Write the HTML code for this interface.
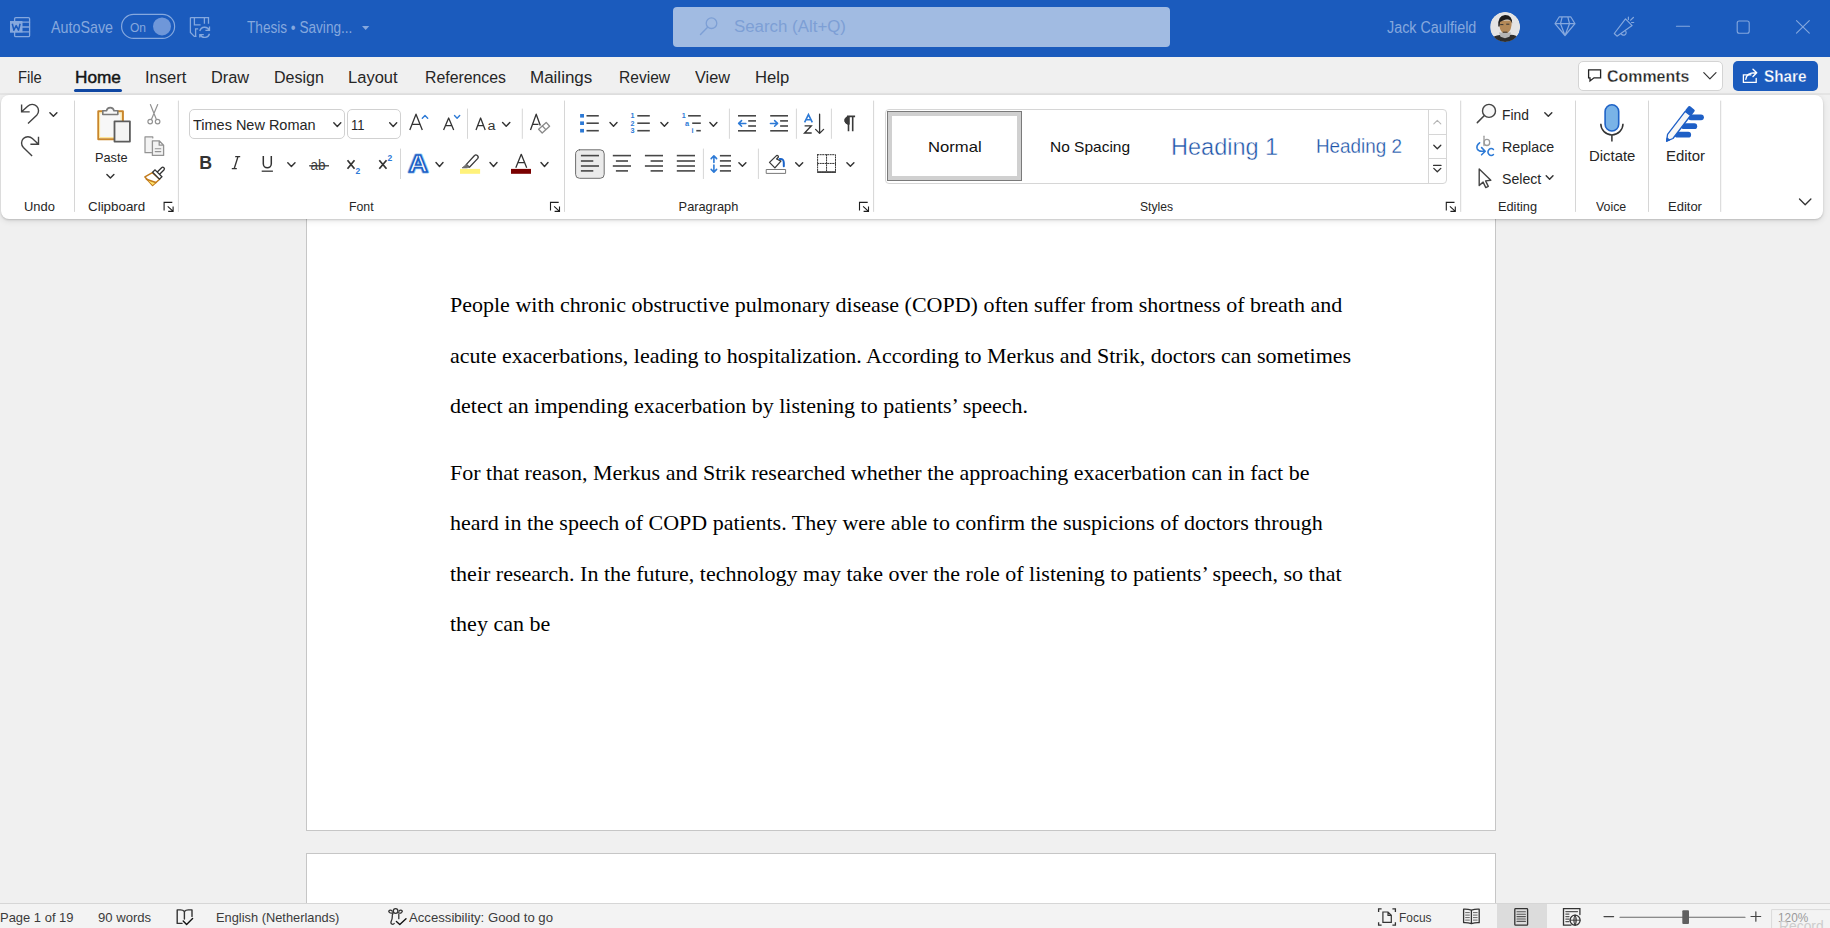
<!DOCTYPE html><html><head><meta charset="utf-8"><style>
html,body{margin:0;padding:0;width:1830px;height:928px;overflow:hidden;background:#f0f0f0;font-family:"Liberation Sans",sans-serif}
.t{position:absolute;white-space:pre;transform-origin:0 0}
svg{position:absolute;left:0;top:0}
</style></head><body>
<div style="position:absolute;left:0px;top:0px;width:1830px;height:57px;background:#1b5bbd"></div>
<div style="position:absolute;left:673px;top:7px;width:497px;height:40px;background:#a1bbe2;border-radius:4px"></div>
<div style="position:absolute;left:0px;top:57px;width:1830px;height:38px;background:#f0f0f0"></div>
<div style="position:absolute;left:0px;top:219px;width:1830px;height:684px;background:#f0f0f0"></div>
<div style="position:absolute;left:306px;top:150px;width:1190px;height:681px;background:#fff;border:1px solid #c6c6c6;box-sizing:border-box"></div>
<div style="position:absolute;left:306px;top:853px;width:1190px;height:60px;background:#fff;border:1px solid #c6c6c6;box-sizing:border-box"></div>
<div style="position:absolute;left:0px;top:93px;width:1830px;height:2px;background:#e4e4e4"></div>
<div style="position:absolute;left:1px;top:95px;width:1822px;height:124px;background:#fff;border-radius:8px;box-shadow:0 1px 2px rgba(0,0,0,0.16),0 2px 6px rgba(0,0,0,0.10)"></div>
<div style="position:absolute;left:0px;top:903px;width:1830px;height:25px;background:#f3f3f3;border-top:1px solid #d6d6d6;box-sizing:border-box"></div>
<div class="t" style="left:50.50px;top:12px;font-size:16.2px;line-height:30px;color:#85a8de;font-family:'Liberation Sans', sans-serif;transform:scaleX(0.8832);">AutoSave</div>
<div class="t" style="left:129.60px;top:13px;font-size:13px;line-height:30px;color:#85a8de;font-family:'Liberation Sans', sans-serif;transform:scaleX(0.9249);">On</div>
<div class="t" style="left:246.50px;top:13px;font-size:16px;line-height:30px;color:#85a8de;font-family:'Liberation Sans', sans-serif;transform:scaleX(0.8507);">Thesis • Saving...</div>
<div class="t" style="left:734.00px;top:12px;font-size:16px;line-height:30px;color:#7d9fd5;font-family:'Liberation Sans', sans-serif;transform:scaleX(1.0536);">Search (Alt+Q)</div>
<div class="t" style="left:1386.70px;top:13px;font-size:16px;line-height:30px;color:#85a8de;font-family:'Liberation Sans', sans-serif;transform:scaleX(0.8966);">Jack Caulfield</div>
<div class="t" style="left:17.70px;top:63px;font-size:16.7px;line-height:30px;color:#262626;font-family:'Liberation Sans', sans-serif;transform:scaleX(0.8848);">File</div>
<div class="t" style="left:74.60px;top:63px;font-size:16.7px;line-height:30px;color:#151515;font-family:'Liberation Sans', sans-serif;transform:scaleX(1.0315);-webkit-text-stroke:0.45px #151515;">Home</div>
<div class="t" style="left:144.60px;top:63px;font-size:16.7px;line-height:30px;color:#262626;font-family:'Liberation Sans', sans-serif;transform:scaleX(0.9904);">Insert</div>
<div class="t" style="left:210.70px;top:63px;font-size:16.7px;line-height:30px;color:#262626;font-family:'Liberation Sans', sans-serif;transform:scaleX(0.9795);">Draw</div>
<div class="t" style="left:273.60px;top:63px;font-size:16.7px;line-height:30px;color:#262626;font-family:'Liberation Sans', sans-serif;transform:scaleX(0.9615);">Design</div>
<div class="t" style="left:348.40px;top:63px;font-size:16.7px;line-height:30px;color:#262626;font-family:'Liberation Sans', sans-serif;transform:scaleX(0.9900);">Layout</div>
<div class="t" style="left:424.60px;top:63px;font-size:16.7px;line-height:30px;color:#262626;font-family:'Liberation Sans', sans-serif;transform:scaleX(0.9485);">References</div>
<div class="t" style="left:530.40px;top:63px;font-size:16.7px;line-height:30px;color:#262626;font-family:'Liberation Sans', sans-serif;transform:scaleX(1.0179);">Mailings</div>
<div class="t" style="left:618.50px;top:63px;font-size:16.7px;line-height:30px;color:#262626;font-family:'Liberation Sans', sans-serif;transform:scaleX(0.9326);">Review</div>
<div class="t" style="left:695.40px;top:63px;font-size:16.7px;line-height:30px;color:#262626;font-family:'Liberation Sans', sans-serif;transform:scaleX(0.9750);">View</div>
<div class="t" style="left:755.30px;top:63px;font-size:16.7px;line-height:30px;color:#262626;font-family:'Liberation Sans', sans-serif;transform:scaleX(0.9971);">Help</div>
<div style="position:absolute;left:74px;top:89px;width:48px;height:3px;background:#0e46a2;border-radius:2px"></div>
<div style="position:absolute;left:1578px;top:61px;width:145px;height:30px;background:#fff;border:1px solid #d4d4d4;border-radius:5px;box-sizing:border-box"></div>
<div class="t" style="left:1607.40px;top:61px;font-size:16.5px;line-height:30px;color:#242424;font-weight:bold;font-family:'Liberation Sans', sans-serif;transform:scaleX(0.9660);-webkit-text-stroke:0.3px #fff;">Comments</div>
<div style="position:absolute;left:1733px;top:61px;width:85px;height:30px;background:#1b5bbd;border-radius:5px"></div>
<div class="t" style="left:1763.50px;top:61px;font-size:16.5px;line-height:30px;color:#ffffff;font-weight:bold;font-family:'Liberation Sans', sans-serif;transform:scaleX(0.9259);-webkit-text-stroke:0.3px #1b5bbd;">Share</div>
<div class="t" style="left:23.60px;top:192px;font-size:12.8px;line-height:30px;color:#262626;font-family:'Liberation Sans', sans-serif;transform:scaleX(1.0098);">Undo</div>
<div class="t" style="left:87.50px;top:192px;font-size:12.8px;line-height:30px;color:#262626;font-family:'Liberation Sans', sans-serif;transform:scaleX(1.0456);">Clipboard</div>
<div class="t" style="left:349.40px;top:192px;font-size:12.8px;line-height:30px;color:#262626;font-family:'Liberation Sans', sans-serif;transform:scaleX(0.9609);">Font</div>
<div class="t" style="left:678.60px;top:192px;font-size:12.8px;line-height:30px;color:#262626;font-family:'Liberation Sans', sans-serif;transform:scaleX(1.0000);">Paragraph</div>
<div class="t" style="left:1140.00px;top:192px;font-size:12.8px;line-height:30px;color:#262626;font-family:'Liberation Sans', sans-serif;transform:scaleX(0.9456);">Styles</div>
<div class="t" style="left:1498.40px;top:192px;font-size:12.8px;line-height:30px;color:#262626;font-family:'Liberation Sans', sans-serif;transform:scaleX(0.9974);">Editing</div>
<div class="t" style="left:1596.10px;top:192px;font-size:12.8px;line-height:30px;color:#262626;font-family:'Liberation Sans', sans-serif;transform:scaleX(0.9649);">Voice</div>
<div class="t" style="left:1667.90px;top:192px;font-size:12.8px;line-height:30px;color:#262626;font-family:'Liberation Sans', sans-serif;transform:scaleX(1.0150);">Editor</div>
<div class="t" style="left:94.70px;top:143px;font-size:13.5px;line-height:30px;color:#262626;font-family:'Liberation Sans', sans-serif;transform:scaleX(0.9449);">Paste</div>
<div class="t" style="left:1501.50px;top:100px;font-size:15px;line-height:30px;color:#262626;font-family:'Liberation Sans', sans-serif;transform:scaleX(0.9212);">Find</div>
<div class="t" style="left:1501.50px;top:132px;font-size:15px;line-height:30px;color:#262626;font-family:'Liberation Sans', sans-serif;transform:scaleX(0.9491);">Replace</div>
<div class="t" style="left:1501.50px;top:164px;font-size:15px;line-height:30px;color:#262626;font-family:'Liberation Sans', sans-serif;transform:scaleX(0.9424);">Select</div>
<div class="t" style="left:1589.00px;top:141px;font-size:15px;line-height:30px;color:#262626;font-family:'Liberation Sans', sans-serif;transform:scaleX(0.9936);">Dictate</div>
<div class="t" style="left:1666.00px;top:141px;font-size:15px;line-height:30px;color:#262626;font-family:'Liberation Sans', sans-serif;transform:scaleX(0.9949);">Editor</div>
<div style="position:absolute;left:189px;top:109px;width:156px;height:30px;border:1px solid #d1d1d1;border-radius:5px;box-sizing:border-box;background:#fff"></div>
<div style="position:absolute;left:347px;top:109px;width:54px;height:30px;border:1px solid #d1d1d1;border-radius:5px;box-sizing:border-box;background:#fff"></div>
<div class="t" style="left:192.80px;top:110px;font-size:15px;line-height:30px;color:#262626;font-family:'Liberation Sans', sans-serif;transform:scaleX(0.9654);">Times New Roman</div>
<div class="t" style="left:351.00px;top:110px;font-size:15px;line-height:30px;color:#262626;font-family:'Liberation Sans', sans-serif;transform:scaleX(0.8654);">11</div>
<div style="position:absolute;left:885px;top:109px;width:562px;height:75px;border:1px solid #d6d6d6;border-radius:4px;box-sizing:border-box;background:#fff"></div>
<div style="position:absolute;left:887px;top:111px;width:135px;height:70px;border:1px solid #7a7a7a;box-sizing:border-box;background:#fff"></div>
<div style="position:absolute;left:888px;top:112px;width:133px;height:68px;border:4px solid #d0d0d0;box-sizing:border-box"></div>
<div style="position:absolute;left:1428px;top:109px;width:1px;height:75px;background:#d6d6d6"></div>
<div style="position:absolute;left:1428px;top:134px;width:19px;height:1px;background:#d6d6d6"></div>
<div style="position:absolute;left:1428px;top:158px;width:19px;height:1px;background:#d6d6d6"></div>
<div class="t" style="left:927.80px;top:132px;font-size:15px;line-height:30px;color:#111;font-family:'Liberation Sans', sans-serif;transform:scaleX(1.1097);">Normal</div>
<div class="t" style="left:1049.80px;top:132px;font-size:15px;line-height:30px;color:#111;font-family:'Liberation Sans', sans-serif;transform:scaleX(1.0323);">No Spacing</div>
<div class="t" style="left:1170.50px;top:132px;font-size:24.5px;line-height:30px;color:#1d54a8;font-family:'Liberation Sans', sans-serif;transform:scaleX(0.9597);-webkit-text-stroke:0.45px #fff;">Heading 1</div>
<div class="t" style="left:1316.20px;top:131px;font-size:20px;line-height:30px;color:#1d54a8;font-family:'Liberation Sans', sans-serif;transform:scaleX(0.9430);-webkit-text-stroke:0.3px #fff;">Heading 2</div>
<div class="t" style="left:0.30px;top:903px;font-size:13.3px;line-height:30px;color:#3b3b3b;font-family:'Liberation Sans', sans-serif;transform:scaleX(0.9748);">Page 1 of 19</div>
<div class="t" style="left:98.40px;top:903px;font-size:13.3px;line-height:30px;color:#3b3b3b;font-family:'Liberation Sans', sans-serif;transform:scaleX(0.9852);">90 words</div>
<div class="t" style="left:216.40px;top:903px;font-size:13.3px;line-height:30px;color:#3b3b3b;font-family:'Liberation Sans', sans-serif;transform:scaleX(0.9648);">English (Netherlands)</div>
<div class="t" style="left:409.20px;top:903px;font-size:13.3px;line-height:30px;color:#3b3b3b;font-family:'Liberation Sans', sans-serif;transform:scaleX(0.9890);">Accessibility: Good to go</div>
<div class="t" style="left:1399.30px;top:903px;font-size:13.3px;line-height:30px;color:#3b3b3b;font-family:'Liberation Sans', sans-serif;transform:scaleX(0.8978);">Focus</div>
<div style="position:absolute;left:1497px;top:904px;width:50px;height:24px;background:#dcdcdc"></div>
<div class="t" style="left:1777.50px;top:903px;font-size:13.3px;line-height:30px;color:#9a9a9a;font-family:'Liberation Sans', sans-serif;transform:scaleX(0.8882);">120%</div>
<div class="t" style="left:1779.00px;top:911px;font-size:14.4px;line-height:30px;color:#cdcdcd;font-family:'Liberation Sans', sans-serif;transform:scaleX(0.9634);">Record</div>
<div class="t" style="left:450.00px;top:290px;font-size:22px;line-height:30px;color:#000;font-family:'Liberation Serif', serif;transform:scaleX(1.0000);">People with chronic obstructive pulmonary disease (COPD) often suffer from shortness of breath and</div>
<div class="t" style="left:450.00px;top:341px;font-size:22px;line-height:30px;color:#000;font-family:'Liberation Serif', serif;transform:scaleX(1.0000);">acute exacerbations, leading to hospitalization. According to Merkus and Strik, doctors can sometimes</div>
<div class="t" style="left:450.00px;top:391px;font-size:22px;line-height:30px;color:#000;font-family:'Liberation Serif', serif;transform:scaleX(1.0000);">detect an impending exacerbation by listening to patients’ speech.</div>
<div class="t" style="left:450.00px;top:458px;font-size:22px;line-height:30px;color:#000;font-family:'Liberation Serif', serif;transform:scaleX(1.0000);">For that reason, Merkus and Strik researched whether the approaching exacerbation can in fact be</div>
<div class="t" style="left:450.00px;top:508px;font-size:22px;line-height:30px;color:#000;font-family:'Liberation Serif', serif;transform:scaleX(1.0000);">heard in the speech of COPD patients. They were able to confirm the suspicions of doctors through</div>
<div class="t" style="left:450.00px;top:559px;font-size:22px;line-height:30px;color:#000;font-family:'Liberation Serif', serif;transform:scaleX(1.0000);">their research. In the future, technology may take over the role of listening to patients’ speech, so that</div>
<div class="t" style="left:450.00px;top:609px;font-size:22px;line-height:30px;color:#000;font-family:'Liberation Serif', serif;transform:scaleX(1.0000);">they can be</div>
<svg width="1830" height="928" viewBox="0 0 1830 928" fill="none" stroke-linecap="round" stroke-linejoin="round"><rect x="14.6" y="17.6" width="15" height="19" rx="1.2" stroke="#85a8de" stroke-width="1.3"/><line x1="22.5" y1="22.2" x2="29.5" y2="22.2" stroke="#85a8de" stroke-width="1.3"/><line x1="22.5" y1="27" x2="29.5" y2="27" stroke="#85a8de" stroke-width="1.3"/><line x1="22.5" y1="31.8" x2="29.5" y2="31.8" stroke="#85a8de" stroke-width="1.3"/><rect x="10" y="21" width="12.5" height="11.7" fill="#85a8de"/><path d="M12.3 23.8 L13.9 30.2 L16.2 25.6 L18.5 30.2 L20.1 23.8" stroke="#1b5bbd" stroke-width="1.5" stroke-linecap="butt"/><rect x="121.6" y="14.4" width="53" height="24" rx="12" stroke="#85a8de" stroke-width="1.2"/><circle cx="162" cy="26.4" r="9" fill="#6f97d9"/><path d="M190.4 17.6 H208.5 V23.8 M204.4 17.6 V23.8 M190.4 17.6 V32.5 L194.3 36.4 H196.5 M194.4 17.6 V24.9 H200.6 M195.6 36.4 V28.8 H198.2" stroke="#85a8de" stroke-width="1.3" stroke-linejoin="miter" stroke-linecap="butt"/><path d="M199.8 31 A5 5 0 0 1 209.3 30.4 M205.4 30.4 H209.5 V26.4 M209.5 33.8 A5 5 0 0 1 200.2 34.6 M203.8 34.6 H199.8 V37.6" stroke="#85a8de" stroke-width="1.3" stroke-linejoin="miter" stroke-linecap="butt"/><path d="M362 25.9 H369.3 L365.65 30 Z" fill="#85a8de"/><circle cx="711.5" cy="23.2" r="5.3" stroke="#7d9fd5" stroke-width="1.3"/><line x1="707.6" y1="27.2" x2="700.5" y2="34.5" stroke="#7d9fd5" stroke-width="1.4"/><defs><clipPath id="av"><circle cx="1505.1" cy="26.9" r="15"/></clipPath></defs><g clip-path="url(#av)"><circle cx="1505.1" cy="26.9" r="15" fill="#e4e4e4"/><path d="M1492 44 L1494 36.5 Q1500 33.5 1505 36.5 Q1510 33.5 1516.5 36 L1518 44 Z" fill="#2e2e2e"/><path d="M1499 32.5 H1511 L1509.5 36.8 L1505 38.3 L1500.5 36.8 Z" fill="#b5b5b5"/><path d="M1499.2 20.5 Q1499 31 1503 33 H1507.5 Q1511.8 31 1511.8 20.5 Z" fill="#b48958"/><path d="M1498.3 26.5 Q1497.5 15.5 1505 15 Q1512.3 14.8 1512.2 23.5 L1511 21 Q1508 18.5 1503 20.5 L1500 22 L1499.6 26.5 Z" fill="#1c1c1c"/><path d="M1500.6 24.6 H1503 M1506.6 24.2 H1509 M1503.2 32.2 H1507" stroke="#333" stroke-width="1"/></g><path d="M1559.3 16.8 H1570.7 L1575 23.7 L1565 35.5 L1555 23.7 Z M1555 23.7 H1575 M1562.2 16.8 L1560.5 23.7 L1565 35.5 L1569.5 23.7 L1567.8 16.8" stroke="#85a8de" stroke-width="1.2"/><path d="M1625.5 18.9 L1632.1 25.6 L1617 36.2 L1614.3 33.5 Z" stroke="#85a8de" stroke-width="1.2" stroke-linejoin="round"/><path d="M1621.3 33.9 A2.6 2.6 0 1 0 1625.6 31" stroke="#85a8de" stroke-width="1.2"/><path d="M1628.4 17.2 V19.4 M1630.6 20.1 L1633.4 17.5 M1631.6 22.5 H1633.7" stroke="#85a8de" stroke-width="1.2"/><line x1="1676.4" y1="26.2" x2="1689.5" y2="26.2" stroke="#85a8de" stroke-width="1.1"/><rect x="1737.2" y="21" width="12" height="12.2" rx="2" stroke="#85a8de" stroke-width="1.1"/><path d="M1796.5 20.6 L1809.3 33.2 M1809.3 20.6 L1796.5 33.2" stroke="#85a8de" stroke-width="1.1"/><path d="M21.6 104.4 V111.9 H29.7 M21.9 111.6 L27.7 106.2 A6.4 6.4 0 0 1 36.7 115.3 L28 123.6" stroke="#424242" stroke-width="1.4" stroke-linecap="butt" stroke-linejoin="miter"/><g transform="translate(60.1,32.3) scale(-1,1)"><path d="M21.6 104.4 V111.9 H29.7 M21.9 111.6 L27.7 106.2 A6.4 6.4 0 0 1 36.7 115.3 L28 123.6" stroke="#424242" stroke-width="1.4" stroke-linecap="butt" stroke-linejoin="miter"/></g><path d="M49.9 112.85 L53.4 116.35 L56.9 112.85" stroke="#333333" stroke-width="1.45"/><rect x="98.3" y="111.2" width="24.6" height="28" fill="#f7f7f7" stroke="#c9862b" stroke-width="2"/><rect x="100" y="112.9" width="21.2" height="24.6" fill="none" stroke="#ffe69a" stroke-width="1"/><path d="M102.8 114.5 V110.8 H106.5 A3.8 3.8 0 0 1 114 110.8 H117.8 V114.5 Z" fill="#f7f7f7" stroke="#7a7a7a" stroke-width="1.6"/><rect x="114.5" y="121.3" width="15.4" height="20.3" fill="#f4f4f4" stroke="#5c5c5c" stroke-width="1.8"/><path d="M106.9 174.45 L110.4 177.95 L113.9 174.45" stroke="#333333" stroke-width="1.45"/><path d="M150.4 104.6 L156.4 119.4 M157.7 104.6 L151.4 119.4" stroke="#939393" stroke-width="1.2"/><circle cx="150.2" cy="121.6" r="2.3" stroke="#939393" stroke-width="1.2"/><circle cx="157.6" cy="121.6" r="2.3" stroke="#939393" stroke-width="1.2"/><path d="M152.8 138 V136.9 H145 V152.7 H151.5" stroke="#939393" stroke-width="1.2" fill="#f3f3f3"/><path d="M152.4 140.8 H159.2 L163.6 145.2 V155.4 H152.4 Z M159.2 140.8 V145.2 H163.6" stroke="#939393" stroke-width="1.3" fill="#f3f3f3"/><path d="M155.2 148.8 H160.8 M155.2 151.6 H160.8" stroke="#939393" stroke-width="1.1"/><path d="M152.4 172.6 L144.9 176.9 L152.6 185.5 L159.6 179.3 Z" fill="#fff" stroke="#c27b1c" stroke-width="1.5"/><path d="M147.6 180 L152.6 185 L156.3 181.9 Z" fill="#ffe46b"/><path d="M146.4 179.2 L155.8 182.5" stroke="#c27b1c" stroke-width="1.5"/><path d="M157.3 172 L161.6 167.7 A1.6 1.6 0 0 1 163.9 170 L159.6 174.3" fill="#fff" stroke="#333" stroke-width="1.3"/><path d="M152.6 172.3 L155 169.9 L161.9 176.8 L159.5 179.2 Z" fill="#fff" stroke="#333" stroke-width="1.3" stroke-linejoin="miter"/><line x1="74.5" y1="101" x2="74.5" y2="211.5" stroke="#d6d6d6" stroke-width="1"/><line x1="178.4" y1="101" x2="178.4" y2="211.5" stroke="#d6d6d6" stroke-width="1"/><line x1="564.5" y1="101" x2="564.5" y2="211.5" stroke="#d6d6d6" stroke-width="1"/><line x1="873.6" y1="101" x2="873.6" y2="211.5" stroke="#d6d6d6" stroke-width="1"/><line x1="1460.7" y1="101" x2="1460.7" y2="211.5" stroke="#d6d6d6" stroke-width="1"/><line x1="1575.5" y1="101" x2="1575.5" y2="211.5" stroke="#d6d6d6" stroke-width="1"/><line x1="1648.5" y1="101" x2="1648.5" y2="211.5" stroke="#d6d6d6" stroke-width="1"/><line x1="1720.7" y1="101" x2="1720.7" y2="211.5" stroke="#d6d6d6" stroke-width="1"/><line x1="467.5" y1="109" x2="467.5" y2="138.4" stroke="#d6d6d6" stroke-width="1"/><line x1="522.3" y1="109" x2="522.3" y2="138.4" stroke="#d6d6d6" stroke-width="1"/><line x1="729.4" y1="109" x2="729.4" y2="138.4" stroke="#d6d6d6" stroke-width="1"/><line x1="796.4" y1="109" x2="796.4" y2="138.4" stroke="#d6d6d6" stroke-width="1"/><line x1="831.4" y1="109" x2="831.4" y2="138.4" stroke="#d6d6d6" stroke-width="1"/><line x1="400.5" y1="149" x2="400.5" y2="178.6" stroke="#d6d6d6" stroke-width="1"/><line x1="703.4" y1="149" x2="703.4" y2="178.6" stroke="#d6d6d6" stroke-width="1"/><line x1="758.4" y1="149" x2="758.4" y2="178.6" stroke="#d6d6d6" stroke-width="1"/><path d="M550.5 210.5 V202.4 H558.7 M554.1 206.4 L559.3 211.20000000000002 M559.5 206.5 V211.4 H554.6" stroke="#1f1f1f" stroke-width="1.1" stroke-linecap="butt" stroke-linejoin="miter"/><path d="M859.5 210.5 V202.4 H867.7 M863.1 206.4 L868.3 211.20000000000002 M868.5 206.5 V211.4 H863.6" stroke="#1f1f1f" stroke-width="1.1" stroke-linecap="butt" stroke-linejoin="miter"/><path d="M164.1 210.5 V202.4 H172.29999999999998 M167.7 206.4 L172.9 211.20000000000002 M173.1 206.5 V211.4 H168.2" stroke="#1f1f1f" stroke-width="1.1" stroke-linecap="butt" stroke-linejoin="miter"/><path d="M1446.3 210.5 V202.4 H1454.5 M1449.8999999999999 206.4 L1455.1 211.20000000000002 M1455.3 206.5 V211.4 H1450.3999999999999" stroke="#1f1f1f" stroke-width="1.1" stroke-linecap="butt" stroke-linejoin="miter"/><path d="M333.8 122.8 L337.3 126.39999999999999 L340.8 122.8" stroke="#333333" stroke-width="1.45"/><path d="M389.7 122.8 L393.2 126.39999999999999 L396.7 122.8" stroke="#333333" stroke-width="1.45"/><text x="199.2" y="168.9" font-family="Liberation Sans" font-weight="bold" font-size="17.8" fill="#333">B</text><path d="M235.2 156.6 H240.2 M231.8 168.6 H236.8 M238 156.6 L234.2 168.6" stroke="#333" stroke-width="1.4" stroke-linecap="butt"/><path d="M263.3 156 V163.8 A4 4 0 0 0 271.3 163.8 V156" stroke="#333" stroke-width="1.5" stroke-linecap="butt"/><line x1="261.7" y1="171.2" x2="272.9" y2="171.2" stroke="#444" stroke-width="1.4" stroke-linecap="butt"/><path d="M287.79999999999995 162.79999999999998 L291.4 166.4 L295.0 162.79999999999998" stroke="#333333" stroke-width="1.45"/><text x="310.6" y="170.2" font-family="Liberation Sans" font-size="15" fill="#3a3a3a" textLength="15" lengthAdjust="spacingAndGlyphs">ab</text><line x1="309.2" y1="165.8" x2="329" y2="165.8" stroke="#333" stroke-width="1.3" stroke-linecap="butt"/><path d="M347.5 160.2 L354.5 168.7 M354.5 160.2 L347.5 168.7" stroke="#333" stroke-width="1.7" stroke-linecap="butt"/><text x="355.6" y="173.8" font-family="Liberation Sans" font-weight="bold" font-size="8.5" fill="#2d7ad6">2</text><path d="M379.3 160.2 L386.5 168.7 M386.5 160.2 L379.3 168.7" stroke="#333" stroke-width="1.7" stroke-linecap="butt"/><text x="387.5" y="160.9" font-family="Liberation Sans" font-weight="bold" font-size="8.5" fill="#2d7ad6">2</text><path d="M409.8 130 L416 114.2 L422.3 130 M412 124.3 H420" stroke="#333" stroke-width="1.3" stroke-linecap="butt"/><path d="M422.3 118.3 L425 115.6 L427.7 118.3" stroke="#2d7ad6" stroke-width="1.4"/><path d="M443.6 130 L448.65 118 L453.7 130 M445.5 125.6 H451.8" stroke="#333" stroke-width="1.3" stroke-linecap="butt"/><path d="M454.5 115.6 L457.1 118.2 L459.7 115.6" stroke="#2d7ad6" stroke-width="1.4"/><path d="M476 130 L480.6 118 L485.2 130 M477.7 125.6 H483.5" stroke="#333" stroke-width="1.3" stroke-linecap="butt"/><text x="487.6" y="130.1" font-family="Liberation Sans" font-size="12.5" fill="#333" textLength="8" lengthAdjust="spacingAndGlyphs">a</text><path d="M502.59999999999997 122.60000000000001 L506.2 126.2 L509.8 122.60000000000001" stroke="#333333" stroke-width="1.45"/><path d="M530.5 130 L536.2 114.2 L540.3 125.5 M532.6 124.3 H538.5" stroke="#333" stroke-width="1.3" stroke-linecap="butt"/><path d="M546.2 122.4 L549.6 126.2 L542.2 133 L538.6 129.2 Z M542.2 125.8 L545.8 129.6" stroke="#8a8a8a" stroke-width="1.3" fill="#fff"/><text x="408.4" y="172.2" font-family="Liberation Sans" font-weight="bold" font-size="24" fill="#fff" stroke="#9ccbf3" stroke-width="3.2" stroke-linejoin="round" textLength="19.4" lengthAdjust="spacingAndGlyphs">A</text><text x="408.4" y="172.2" font-family="Liberation Sans" font-weight="bold" font-size="24" fill="#fff" stroke="#1d5fc6" stroke-width="1.6" stroke-linejoin="miter" textLength="19.4" lengthAdjust="spacingAndGlyphs">A</text><path d="M436.0 162.6 L439.5 166.4 L443.0 162.6" stroke="#333333" stroke-width="1.45"/><path d="M466.2 164.6 L474.3 155.8 A1.9 1.9 0 0 1 477.6 158.6 L469.4 167.3 Z" stroke="#3a3a3a" stroke-width="1.3" fill="#fff"/><path d="M466.2 164.6 L462 167.9 H466.5 L469.4 167.3 Z" fill="#6f6f6f" stroke="#6f6f6f" stroke-width="0.8"/><rect x="460" y="168.9" width="20.1" height="4.9" fill="#fff27a"/><path d="M490.0 162.6 L493.5 166.4 L497.0 162.6" stroke="#333333" stroke-width="1.45"/><path d="M515.8 167.7 L521.25 154.3 L526.7 167.7 M517.8 162.6 H524.7" stroke="#333" stroke-width="1.3" stroke-linecap="butt"/><rect x="511" y="168.9" width="20" height="4.9" fill="#7a0000"/><path d="M541.0 162.6 L544.5 166.4 L548.0 162.6" stroke="#333333" stroke-width="1.45"/><rect x="580.1" y="114.0" width="3.9" height="3.6" fill="#2d7ad6"/><line x1="586.5" y1="115.8" x2="598.8" y2="115.8" stroke="#474747" stroke-width="1.6" stroke-linecap="butt"/><rect x="580.1" y="121.4" width="3.9" height="3.6" fill="#2d7ad6"/><line x1="586.5" y1="123.2" x2="598.8" y2="123.2" stroke="#474747" stroke-width="1.6" stroke-linecap="butt"/><rect x="580.1" y="128.89999999999998" width="3.9" height="3.6" fill="#2d7ad6"/><line x1="586.5" y1="130.7" x2="598.8" y2="130.7" stroke="#474747" stroke-width="1.6" stroke-linecap="butt"/><path d="M610.0 122.60000000000001 L613.5 126.2 L617.0 122.60000000000001" stroke="#333333" stroke-width="1.45"/><text x="630.4" y="118.39999999999999" font-family="Liberation Sans" font-weight="bold" font-size="7.2" fill="#2d7ad6">1</text><line x1="637.3" y1="115.8" x2="649.8" y2="115.8" stroke="#474747" stroke-width="1.6" stroke-linecap="butt"/><text x="630.4" y="125.8" font-family="Liberation Sans" font-weight="bold" font-size="7.2" fill="#2d7ad6">2</text><line x1="637.3" y1="123.2" x2="649.8" y2="123.2" stroke="#474747" stroke-width="1.6" stroke-linecap="butt"/><text x="630.4" y="133.29999999999998" font-family="Liberation Sans" font-weight="bold" font-size="7.2" fill="#2d7ad6">3</text><line x1="637.3" y1="130.7" x2="649.8" y2="130.7" stroke="#474747" stroke-width="1.6" stroke-linecap="butt"/><path d="M660.9 122.60000000000001 L664.4 126.2 L667.9 122.60000000000001" stroke="#333333" stroke-width="1.45"/><text x="681.8" y="118.4" font-family="Liberation Sans" font-weight="bold" font-size="7.2" fill="#2d7ad6">1</text><text x="684.9" y="126.2" font-family="Liberation Sans" font-weight="bold" font-size="7.4" fill="#2d7ad6">a</text><text x="691.6" y="133.4" font-family="Liberation Sans" font-weight="bold" font-size="7.2" fill="#2d7ad6">i</text><line x1="688.1" y1="115.8" x2="700.8" y2="115.8" stroke="#474747" stroke-width="1.6" stroke-linecap="butt"/><line x1="692.2" y1="123.2" x2="700.8" y2="123.2" stroke="#474747" stroke-width="1.6" stroke-linecap="butt"/><line x1="696.3" y1="130.7" x2="700.8" y2="130.7" stroke="#474747" stroke-width="1.6" stroke-linecap="butt"/><path d="M709.9 122.60000000000001 L713.4 126.2 L716.9 122.60000000000001" stroke="#333333" stroke-width="1.45"/><line x1="738" y1="115.8" x2="756" y2="115.8" stroke="#474747" stroke-width="1.6" stroke-linecap="butt"/><line x1="738" y1="130.8" x2="756" y2="130.8" stroke="#474747" stroke-width="1.6" stroke-linecap="butt"/><line x1="748.2" y1="120.9" x2="756" y2="120.9" stroke="#474747" stroke-width="1.6" stroke-linecap="butt"/><line x1="748.2" y1="126" x2="756" y2="126" stroke="#474747" stroke-width="1.6" stroke-linecap="butt"/><path d="M745.9 123.4 H738.8 M741.6 120.6 L738.6 123.4 L741.6 126.2" stroke="#2d7ad6" stroke-width="1.5"/><line x1="770.2" y1="115.8" x2="788" y2="115.8" stroke="#474747" stroke-width="1.6" stroke-linecap="butt"/><line x1="770.2" y1="130.8" x2="788" y2="130.8" stroke="#474747" stroke-width="1.6" stroke-linecap="butt"/><line x1="780.1" y1="120.9" x2="788" y2="120.9" stroke="#474747" stroke-width="1.6" stroke-linecap="butt"/><line x1="780.1" y1="126" x2="788" y2="126" stroke="#474747" stroke-width="1.6" stroke-linecap="butt"/><path d="M770.4 123.4 H777.4 M774.6 120.6 L777.6 123.4 L774.6 126.2" stroke="#2d7ad6" stroke-width="1.5"/><path d="M804.6 122.4 L808.45 114.6 L812.3 122.4 M805.9 119.8 H811" stroke="#2d7ad6" stroke-width="1.6" stroke-linecap="butt" stroke-linejoin="miter"/><path d="M804.6 125.9 H811.2 L804.6 133 H811.7" stroke="#333" stroke-width="1.4" stroke-linecap="butt" stroke-linejoin="miter"/><path d="M819.6 114.2 V133.2 M815.6 129.4 L819.6 133.4 L823.6 129.4" stroke="#333" stroke-width="1.3"/><path d="M847 116.4 H855.1 M848.5 116.4 V131.3 M852.7 116.4 V131.3" stroke="#3a3a3a" stroke-width="1.6" stroke-linecap="butt"/><path d="M848.8 116.4 A4.1 4 0 0 0 848.8 124.4 Z" fill="#3a3a3a" stroke="#3a3a3a" stroke-width="1"/><rect x="575.6" y="149.8" width="28.6" height="28.5" rx="4" fill="#ebebeb" stroke="#6e6e6e" stroke-width="1"/><line x1="580.9" y1="155.6" x2="599" y2="155.6" stroke="#474747" stroke-width="1.6" stroke-linecap="butt"/><line x1="612.8" y1="155.6" x2="631" y2="155.6" stroke="#474747" stroke-width="1.6" stroke-linecap="butt"/><line x1="644.9" y1="155.6" x2="663" y2="155.6" stroke="#474747" stroke-width="1.6" stroke-linecap="butt"/><line x1="676.8" y1="155.6" x2="695" y2="155.6" stroke="#474747" stroke-width="1.6" stroke-linecap="butt"/><line x1="580.9" y1="161" x2="593.3" y2="161" stroke="#474747" stroke-width="1.6" stroke-linecap="butt"/><line x1="615.9" y1="161" x2="628" y2="161" stroke="#474747" stroke-width="1.6" stroke-linecap="butt"/><line x1="650.6" y1="161" x2="663" y2="161" stroke="#474747" stroke-width="1.6" stroke-linecap="butt"/><line x1="676.8" y1="161" x2="695" y2="161" stroke="#474747" stroke-width="1.6" stroke-linecap="butt"/><line x1="580.9" y1="166" x2="599" y2="166" stroke="#474747" stroke-width="1.6" stroke-linecap="butt"/><line x1="612.8" y1="166" x2="631" y2="166" stroke="#474747" stroke-width="1.6" stroke-linecap="butt"/><line x1="644.9" y1="166" x2="663" y2="166" stroke="#474747" stroke-width="1.6" stroke-linecap="butt"/><line x1="676.8" y1="166" x2="695" y2="166" stroke="#474747" stroke-width="1.6" stroke-linecap="butt"/><line x1="580.9" y1="170.9" x2="593.3" y2="170.9" stroke="#474747" stroke-width="1.6" stroke-linecap="butt"/><line x1="615.9" y1="170.9" x2="628" y2="170.9" stroke="#474747" stroke-width="1.6" stroke-linecap="butt"/><line x1="650.6" y1="170.9" x2="663" y2="170.9" stroke="#474747" stroke-width="1.6" stroke-linecap="butt"/><line x1="676.8" y1="170.9" x2="695" y2="170.9" stroke="#474747" stroke-width="1.6" stroke-linecap="butt"/><line x1="719.9" y1="155.7" x2="731" y2="155.7" stroke="#474747" stroke-width="1.6" stroke-linecap="butt"/><line x1="719.9" y1="160.9" x2="731" y2="160.9" stroke="#474747" stroke-width="1.6" stroke-linecap="butt"/><line x1="719.9" y1="165.9" x2="731" y2="165.9" stroke="#474747" stroke-width="1.6" stroke-linecap="butt"/><line x1="719.9" y1="170.9" x2="731" y2="170.9" stroke="#474747" stroke-width="1.6" stroke-linecap="butt"/><path d="M713.9 156 V162.4 M711.2 158.6 L713.9 155.8 L716.6 158.6 M713.9 165 V172 M711.2 169.4 L713.9 172.2 L716.6 169.4" stroke="#2d7ad6" stroke-width="1.6"/><path d="M738.9 162.7 L742.4 166.3 L745.9 162.7" stroke="#333333" stroke-width="1.45"/><path d="M769.5 162.4 L776.5 155.6 A1.3 1.3 0 0 1 778.3 157.2 L776.6 159 L780.9 161.1 L774.9 167.9 Z" stroke="#3a3a3a" stroke-width="1.3" fill="#fff"/><path d="M779.6 159 Q783.8 158.2 783.8 163 V166.2" stroke="#1a63c9" stroke-width="2"/><rect x="766.6" y="169.5" width="19" height="3.9" stroke="#6a6a6a" stroke-width="0.9" fill="#fff"/><path d="M795.7 162.7 L799.2 166.3 L802.7 162.7" stroke="#333333" stroke-width="1.45"/><rect x="817.6" y="154.7" width="17.9" height="17.5" stroke="#333" stroke-width="1" stroke-dasharray="1.2 1.3" fill="none"/><path d="M826.55 154.7 V172.2 M817.6 163.45 H835.5" stroke="#333" stroke-width="1" stroke-dasharray="1.2 1.3"/><line x1="817.2" y1="172.1" x2="835.9" y2="172.1" stroke="#3a3a3a" stroke-width="1.6" stroke-linecap="butt"/><path d="M846.9 162.7 L850.4 166.3 L853.9 162.7" stroke="#333333" stroke-width="1.45"/><path d="M1433.8 123.8 L1437.3 120.3 L1440.8 123.8" stroke="#b5b5b5" stroke-width="1.1"/><path d="M1433.8 145.25 L1437.3 148.75 L1440.8 145.25" stroke="#333" stroke-width="1.3"/><path d="M1433.8 168.4 L1437.3 171.8 L1440.8 168.4 M1433.6 165.4 H1441" stroke="#333" stroke-width="1.3"/><circle cx="1489" cy="110.9" r="6.5" fill="#f8f8f8" stroke="#444" stroke-width="1.4"/><line x1="1484.4" y1="115.5" x2="1477.3" y2="122.6" stroke="#444" stroke-width="1.5"/><path d="M1544.8 112.85 L1548.3 116.35 L1551.8 112.85" stroke="#333333" stroke-width="1.45"/><path d="M1484 136.2 V145.6" stroke="#9c9c9c" stroke-width="1.3"/><ellipse cx="1486.9" cy="142.4" rx="2.8" ry="3.1" stroke="#9c9c9c" stroke-width="1.3"/><path d="M1493.5 149.5 A3.2 3.5 0 1 0 1493.5 154.5" stroke="#2d7ad6" stroke-width="1.4"/><path d="M1479.6 142.8 Q1476 145.5 1477.2 148.8 Q1478.5 151.2 1481.5 151.2 H1485 M1481.6 147.6 L1485.2 151.2 L1481.6 154.8" stroke="#2d7ad6" stroke-width="1.6"/><path d="M1479.2 169 L1490.8 180.3 L1485.6 180.9 L1488.3 186.4 L1485.8 187.6 L1483.1 182.1 L1479.2 185.5 Z" fill="#fff" stroke="#444" stroke-width="1.4"/><path d="M1546.1999999999998 175.75 L1549.6 179.25 L1553.0 175.75" stroke="#333333" stroke-width="1.45"/><rect x="1605.1" y="104.7" width="13.6" height="26.3" rx="6.8" fill="#79b3e7" stroke="#1f63c7" stroke-width="1.6"/><path d="M1600.8 123.8 A11.1 11.1 0 0 0 1623 123.8 M1611.9 135 V141.4" stroke="#333" stroke-width="1.5" stroke-linecap="butt"/><path d="M1691 117.3 H1701" stroke="#1e5fc6" stroke-width="5.8" stroke-linecap="round"/><path d="M1684 126.2 H1694.3" stroke="#1e5fc6" stroke-width="5.8" stroke-linecap="round"/><path d="M1677.5 134.7 H1688.2" stroke="#1e5fc6" stroke-width="5.8" stroke-linecap="round"/><g transform="translate(1666.6,141.2) rotate(-52.5)"><path d="M0 0 L6 -3.4 H35 V3.4 H6 Z" fill="#f7f7f7" stroke="#1e5fc6" stroke-width="1.3" stroke-linejoin="round"/><rect x="35" y="-4" width="7" height="8" rx="1.5" fill="#1e5fc6"/><path d="M0 0 L2.8 -1.6 V1.6 Z" fill="#1e5fc6" stroke="#1e5fc6" stroke-width="1"/></g><path d="M1799.5 199 L1805.2 204.8 L1810.9 199" stroke="#333" stroke-width="1.3"/><path d="M1588.6 69.9 H1600.6 V77.8 H1594 L1590 81 V77.8 H1588.6 Z" stroke="#222" stroke-width="1.3" stroke-linejoin="miter"/><path d="M1703.8 72.7 L1709.9 78.8 L1716 72.7" stroke="#333" stroke-width="1.2"/><path d="M1751 74.8 H1743.4 V82.4 H1756.2 V78.4" stroke="#fff" stroke-width="1.3" stroke-linejoin="miter"/><path d="M1745.8 79.3 Q1746.3 72.6 1756.3 72.8 M1753 69.2 L1756.7 72.8 L1753 76.4" stroke="#fff" stroke-width="1.4"/><path d="M184.4 911.5 Q183 909.9 180.5 909.9 H177.2 V923.4 H182 M184.4 911.5 Q185.8 909.9 188.3 909.9 H192 V916.4 M184.4 911.5 V919" stroke="#333" stroke-width="1.4" stroke-linejoin="round"/><path d="M183.2 921 L186.6 924.4 L192.6 918.6" stroke="#111" stroke-width="1.4"/><circle cx="395.6" cy="911" r="2.3" stroke="#333" stroke-width="1.3"/><path d="M393.4 912.7 Q391 913.6 389.5 912.4 Q388 911 389.5 910.3 Q391 909.7 392.2 911.2 M397.8 912.7 Q400.2 913.6 401.6 912.4 Q403 911 401.6 910.3 Q400 909.8 399 911.2 M393 913.8 Q392 914.7 392.3 916.5 Q392.3 919 391.3 921 Q390.2 923.5 392.2 924.2 Q393.5 924.6 394.2 923.5 M398.8 914.3 V918.7" stroke="#333" stroke-width="1.3"/><path d="M396.4 921.5 L399.8 924.5 L406 918.8" stroke="#111" stroke-width="1.4"/><path d="M1378.6 912 V908.9 H1381.6 M1392.4 908.9 H1395.4 V912 M1395.4 922.2 V925.2 H1392.4 M1381.6 925.2 H1378.6 V922.2" stroke="#333" stroke-width="1.3" stroke-linejoin="miter" stroke-linecap="butt"/><path d="M1382.9 912 H1388 L1391.3 915.3 V922.4 H1382.9 Z M1388 912 V915.3 H1391.3" stroke="#333" stroke-width="1.2" stroke-linejoin="miter"/><path d="M1471.4 910.2 Q1467.5 908.9 1463.6 909.2 V922.6 Q1467.5 922.3 1471.4 923.6 Q1475.3 922.3 1479.2 922.6 V909.2 Q1475.3 908.9 1471.4 910.2 Z M1471.4 910.2 V923.6" stroke="#333" stroke-width="1.3"/><path d="M1465.6 912.6 H1469.4 M1473.4 912.6 H1477.2" stroke="#666" stroke-width="1"/><path d="M1465.6 915.1 H1469.4 M1473.4 915.1 H1477.2" stroke="#666" stroke-width="1"/><path d="M1465.6 917.6 H1469.4 M1473.4 917.6 H1477.2" stroke="#666" stroke-width="1"/><path d="M1465.6 920.1 H1469.4 M1473.4 920.1 H1477.2" stroke="#666" stroke-width="1"/><rect x="1514.8" y="908.7" width="12.8" height="16.5" rx="0.8" stroke="#333" stroke-width="1.3"/><line x1="1517" y1="911.8" x2="1525.4" y2="911.8" stroke="#555" stroke-width="1.1"/><line x1="1517" y1="914.2" x2="1525.4" y2="914.2" stroke="#555" stroke-width="1.1"/><line x1="1517" y1="916.6" x2="1525.4" y2="916.6" stroke="#555" stroke-width="1.1"/><line x1="1517" y1="919" x2="1525.4" y2="919" stroke="#555" stroke-width="1.1"/><line x1="1517" y1="921.4" x2="1525.4" y2="921.4" stroke="#555" stroke-width="1.1"/><path d="M1571 925.1 H1563.5 V908.7 H1579.9 V914.5" stroke="#333" stroke-width="1.3" stroke-linejoin="miter"/><line x1="1565.8" y1="911.6" x2="1577.5" y2="911.6" stroke="#555" stroke-width="1.1"/><line x1="1565.8" y1="914.1" x2="1569" y2="914.1" stroke="#555" stroke-width="1.1"/><line x1="1565.8" y1="916.6" x2="1569" y2="916.6" stroke="#555" stroke-width="1.1"/><line x1="1565.8" y1="919.1" x2="1569" y2="919.1" stroke="#555" stroke-width="1.1"/><line x1="1565.8" y1="921.6" x2="1569" y2="921.6" stroke="#555" stroke-width="1.1"/><circle cx="1575.1" cy="920.2" r="5" fill="#f3f3f3" stroke="#333" stroke-width="1.3"/><path d="M1570.1 920.2 H1580.1 M1575.1 915.2 V925.2 M1575.1 915.2 Q1572.2 920.2 1575.1 925.2 M1575.1 915.2 Q1578 920.2 1575.1 925.2" stroke="#333" stroke-width="0.9"/><line x1="1604" y1="916.6" x2="1613.6" y2="916.6" stroke="#444" stroke-width="1.2"/><line x1="1620" y1="917.2" x2="1745" y2="917.2" stroke="#6a6a6a" stroke-width="1.1"/><rect x="1682.3" y="910.2" width="6.7" height="13.7" rx="1" fill="#606060"/><path d="M1751 916.5 H1760.7 M1755.85 911.8 V921.2" stroke="#444" stroke-width="1.2"/><path d="M1771.6 928 V909.6 H1830" stroke="#dadada" stroke-width="1"/></svg>
</body></html>
